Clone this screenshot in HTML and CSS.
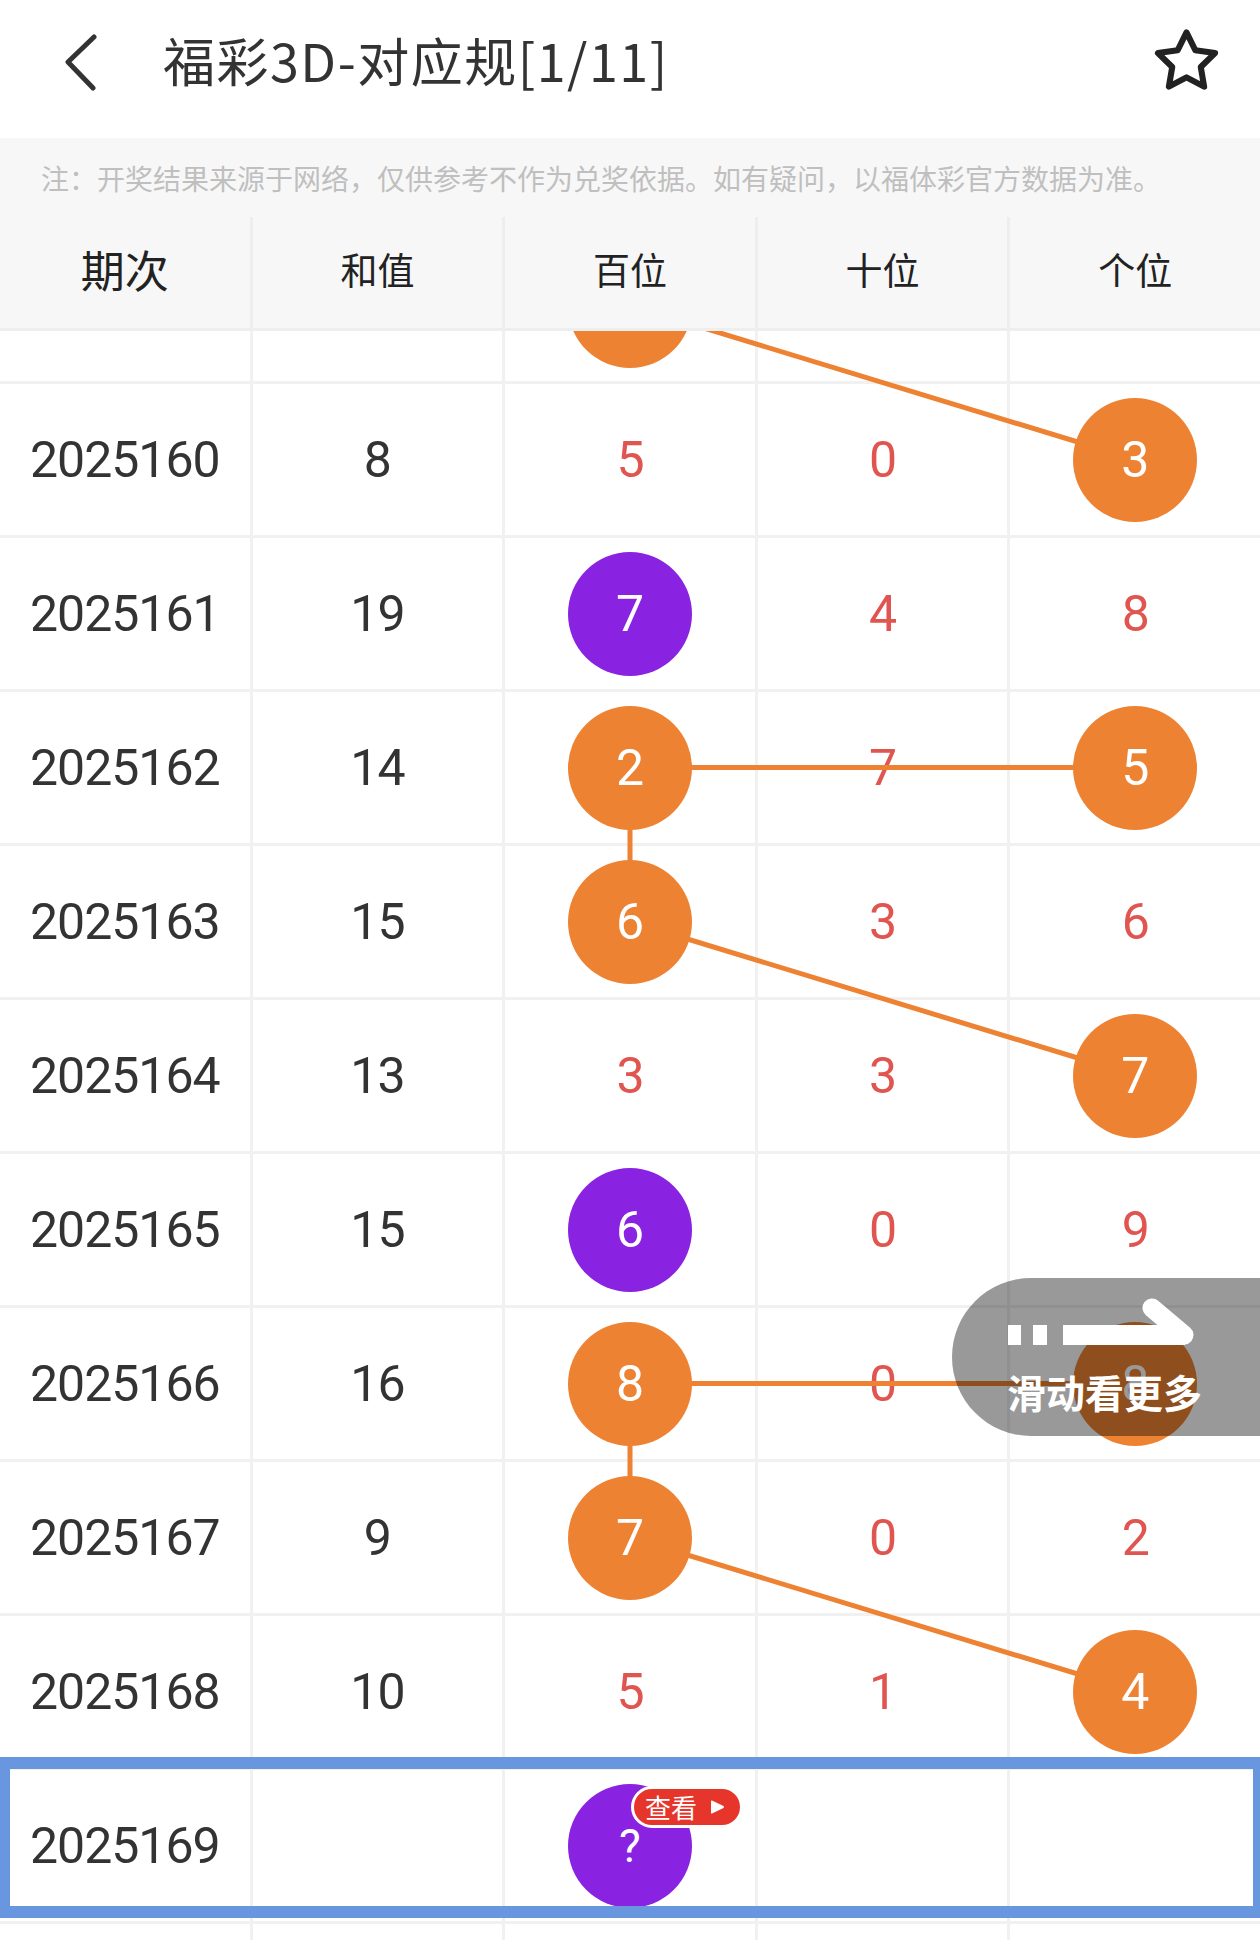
FILE: index.html
```html
<!DOCTYPE html>
<html lang="zh-CN">
<head>
<meta charset="utf-8">
<title>福彩3D-对应规</title>
<link rel="stylesheet" href="styles.css">
</head>
<body>
<div class="page">
  <header class="topbar">
    <svg class="back" viewBox="0 0 40 62" aria-hidden="true">
      <path d="M34 8 L8 33 L33 59" fill="none" stroke="#333" stroke-width="5" stroke-linecap="round" stroke-linejoin="round"/>
    </svg>
    <h1 class="title">福彩3D-对应规[1/11]</h1>
    <svg class="star" viewBox="0 0 80 80" aria-hidden="true">
      <path d="M40 10 L49.4 29.06 L70.43 32.11 L55.22 46.94 L58.81 67.89 L40 58 L21.19 67.89 L24.78 46.94 L9.57 32.11 L30.6 29.06 Z" fill="none" stroke="#222" stroke-width="6.5" stroke-linejoin="round"/>
    </svg>
  </header>

  <div class="notice">注：开奖结果来源于网络，仅供参考不作为兑奖依据。如有疑问，以福体彩官方数据为准。</div>

  <div class="thead">
    <div class="th th-first">期次</div>
    <div class="th">和值</div>
    <div class="th">百位</div>
    <div class="th">十位</div>
    <div class="th">个位</div>
  </div>

  <div class="viewport">
    <div class="grid">
      <svg class="lines" width="1260" height="1845" viewBox="0 0 1260 1845" aria-hidden="true">
        <g stroke="#ee8233" stroke-width="5" stroke-linecap="round" fill="none">
          <line x1="630" y1="75.5" x2="1135" y2="229.5"/>
          <line x1="630" y1="537.5" x2="1135" y2="537.5"/>
          <line x1="630" y1="537.5" x2="630" y2="691.5"/>
          <line x1="630" y1="691.5" x2="1135" y2="845.5"/>
          <line x1="630" y1="1153.5" x2="1135" y2="1153.5"/>
          <line x1="630" y1="1153.5" x2="630" y2="1307.5"/>
          <line x1="630" y1="1307.5" x2="1135" y2="1461.5"/>
        </g>
      </svg>

      <div class="cell"></div><div class="cell"></div><div class="cell"><span class="ball orange"></span></div><div class="cell"></div><div class="cell"></div>

      <div class="cell">2025160</div><div class="cell">8</div><div class="cell red">5</div><div class="cell red">0</div><div class="cell"><span class="ball orange">3</span></div>

      <div class="cell">2025161</div><div class="cell">19</div><div class="cell"><span class="ball purple">7</span></div><div class="cell red">4</div><div class="cell red">8</div>

      <div class="cell">2025162</div><div class="cell">14</div><div class="cell"><span class="ball orange">2</span></div><div class="cell red">7</div><div class="cell"><span class="ball orange">5</span></div>

      <div class="cell">2025163</div><div class="cell">15</div><div class="cell"><span class="ball orange">6</span></div><div class="cell red">3</div><div class="cell red">6</div>

      <div class="cell">2025164</div><div class="cell">13</div><div class="cell red">3</div><div class="cell red">3</div><div class="cell"><span class="ball orange">7</span></div>

      <div class="cell">2025165</div><div class="cell">15</div><div class="cell"><span class="ball purple">6</span></div><div class="cell red">0</div><div class="cell red">9</div>

      <div class="cell">2025166</div><div class="cell">16</div><div class="cell"><span class="ball orange">8</span></div><div class="cell red">0</div><div class="cell"><span class="ball orange">8</span></div>

      <div class="cell">2025167</div><div class="cell">9</div><div class="cell"><span class="ball orange">7</span></div><div class="cell red">0</div><div class="cell red">2</div>

      <div class="cell">2025168</div><div class="cell">10</div><div class="cell red">5</div><div class="cell red">1</div><div class="cell"><span class="ball orange">4</span></div>

      <div class="cell">2025169</div><div class="cell"></div>
      <div class="cell">
        <span class="ball purple ball-q">?
          <span class="badge">查看<svg class="tri" viewBox="0 0 15 16" aria-hidden="true"><path d="M2 1.5 L13.5 7 Q14.5 8 13.5 9 L2 14.5 Q1 15 1 13.5 L1 2.5 Q1 1 2 1.5 Z" fill="#fff"/></svg></span>
        </span>
      </div>
      <div class="cell"></div><div class="cell"></div>

      <div class="cell"></div><div class="cell"></div><div class="cell"></div><div class="cell"></div><div class="cell"></div>

      <div class="current"></div>
    </div>
  </div>

  <div class="swipe">
    <svg class="swipe-arrow" viewBox="0 0 190 62" aria-hidden="true">
      <rect x="1" y="37" width="13" height="20" fill="#fff"/>
      <rect x="26" y="37" width="14" height="20" fill="#fff"/>
      <rect x="56" y="37" width="122" height="20" fill="#fff"/>
      <line x1="145" y1="20" x2="177" y2="47" stroke="#fff" stroke-width="19" stroke-linecap="round"/>
    </svg>
    <div class="swipe-text">滑动看更多</div>
  </div>
</div>
</body>
</html>
```

FILE: styles.css
```css
* {
  box-sizing: border-box;
  margin: 0;
  padding: 0;
}

html, body {
  width: 1260px;
  height: 1940px;
  overflow: hidden;
  background: #fff;
}

body {
  font-family: Roboto, "Noto Sans CJK SC", sans-serif;
  color: #333;
}

.page {
  position: relative;
  width: 1260px;
  height: 1940px;
  overflow: hidden;
}

/* top bar */
.topbar {
  height: 138px;
  padding-bottom: 18px;
  display: flex;
  align-items: center;
  background: #fff;
}

.back {
  flex: none;
  width: 40px;
  height: 62px;
  margin-left: 60px;
}

.title {
  margin-left: 63px;
  font-family: "Noto Sans CJK SC", sans-serif;
  font-size: 52px;
  font-weight: 400;
  line-height: 1;
  color: #333;
  letter-spacing: 1.5px;
  white-space: nowrap;
}

.star {
  flex: none;
  width: 75px;
  height: 75px;
  margin-left: auto;
  margin-right: 36px;
}

/* notice */
.notice {
  height: 79px;
  padding-left: 41px;
  display: flex;
  align-items: center;
  background: #f7f7f7;
  font-family: "Noto Sans CJK SC", sans-serif;
  font-size: 28px;
  color: #bfbfbf;
  white-space: nowrap;
  overflow: hidden;
}

/* table head */
.thead {
  height: 114px;
  padding-bottom: 3px;
  display: grid;
  grid-template-columns: repeat(5, 1fr);
  column-gap: 3px;
  background: #eeeeee;
}

.th {
  display: flex;
  align-items: center;
  justify-content: center;
  padding-bottom: 6px;
  background: #f7f7f7;
  font-family: "Noto Sans CJK SC", sans-serif;
  font-size: 37px;
  line-height: 1.2;
  color: #222;
}

.th-first {
  font-size: 44px;
  font-weight: 400;
}

/* body */
.viewport {
  height: 1609px;
  overflow: hidden;
}

.grid {
  position: relative;
  margin-top: -101px;
  display: grid;
  grid-template-columns: repeat(5, 1fr);
  grid-auto-rows: 151px;
  gap: 3px;
  background: #f1f1f1;
}

.cell {
  display: flex;
  align-items: center;
  justify-content: center;
  background: #fff;
  font-size: 50px;
  letter-spacing: -1px;
  color: #333;
}

.red {
  color: #e05550;
}

.lines {
  position: absolute;
  left: 0;
  top: 0;
  z-index: 1;
}

.ball {
  position: relative;
  z-index: 2;
  width: 124px;
  height: 124px;
  border-radius: 50%;
  display: flex;
  align-items: center;
  justify-content: center;
  color: #fff;
  font-size: 50px;
  letter-spacing: 0;
}

.orange {
  background: #ee8233;
}

.purple {
  background: #8a22e2;
}

.ball-q {
  font-size: 46px;
}

.badge {
  position: absolute;
  left: 63px;
  top: 2px;
  height: 42px;
  padding: 0 15px 0 11px;
  display: flex;
  align-items: center;
  gap: 13px;
  background: #e6352b;
  border: 3px solid #fff;
  border-radius: 21px;
  font-family: "Noto Sans CJK SC", sans-serif;
  font-size: 26px;
  line-height: 1;
  color: #fff;
  white-space: nowrap;
}

.tri {
  width: 15px;
  height: 16px;
  flex: none;
}

.current {
  position: absolute;
  left: 0;
  top: 1527px;
  width: 1260px;
  height: 161px;
  border-style: solid;
  border-color: #6897e0;
  border-width: 12px 7px 12px 10px;
  z-index: 3;
}

/* swipe hint overlay */
.swipe {
  position: absolute;
  left: 952px;
  top: 1278px;
  width: 308px;
  height: 158px;
  padding: 10px 0 0 55px;
  background: rgba(0, 0, 0, 0.4);
  border-radius: 79px 0 0 79px;
  z-index: 10;
}

.swipe-arrow {
  display: block;
  width: 190px;
  height: 62px;
}

.swipe-text {
  margin-top: 22px;
  font-family: "Noto Sans CJK SC", sans-serif;
  font-size: 39px;
  font-weight: 700;
  line-height: 1;
  color: #fff;
  white-space: nowrap;
}
```
